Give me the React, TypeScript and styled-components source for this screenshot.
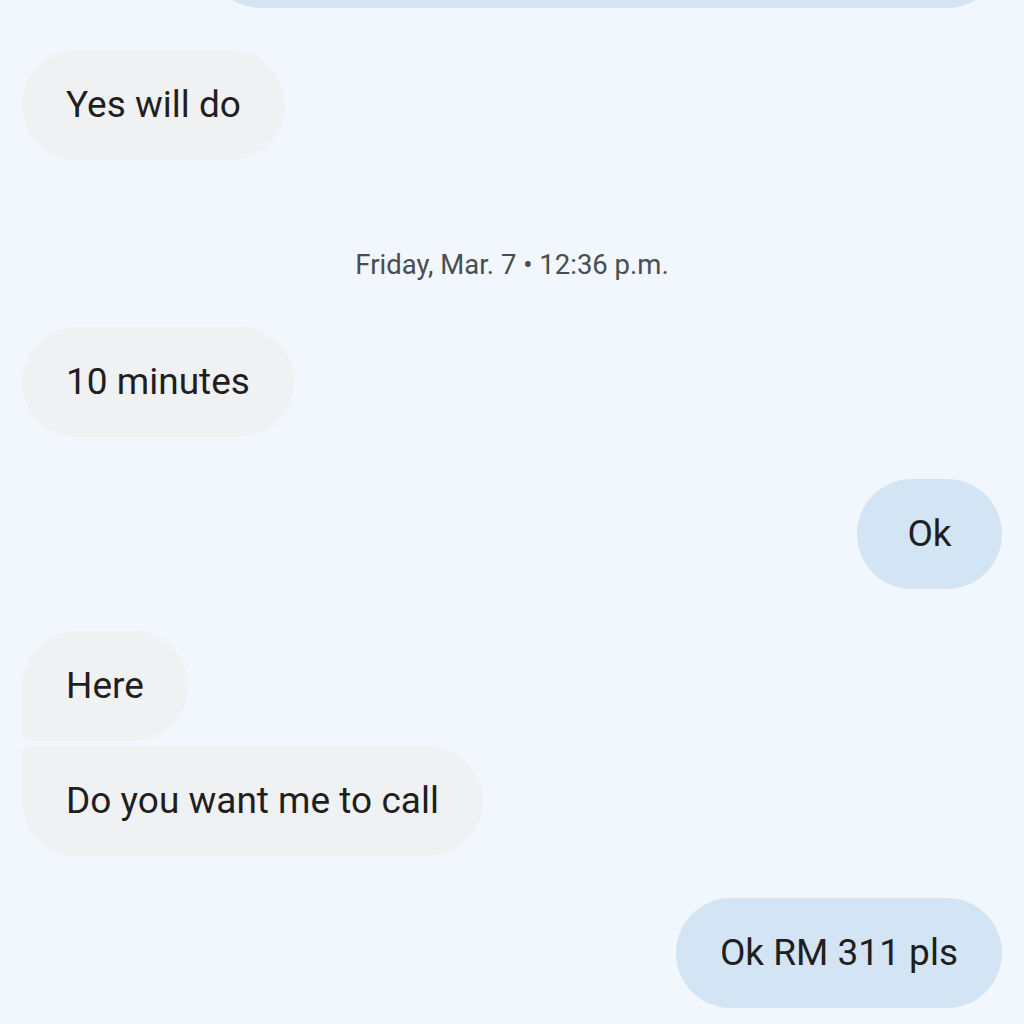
import styled, { createGlobalStyle, css } from "styled-components"

const GlobalStyle = createGlobalStyle`
  html, body {
    margin: 0;
    padding: 0;
    background: #f1f7fc;
    overflow: hidden;
  }
  body {
    font-family: Roboto, "Noto Sans", sans-serif;
    color: #1f1f1f;
  }
`

type Side = "in" | "out"
type Group = "single" | "first" | "last"

interface Message {
  kind: "msg"
  side: Side
  text: string
  group?: Group
  width?: number
}

interface Stamp {
  kind: "stamp"
  text: string
}

type Item = Message | Stamp

const Thread = styled.div`
  display: flex;
  flex-direction: column;
  padding: 0 22px;
  margin-top: -102px;
  height: 1126px;
  overflow: hidden;
`

const Row = styled.div<{ $side: Side; $tight: boolean }>`
  display: flex;
  justify-content: ${(p) => (p.$side === "out" ? "flex-end" : "flex-start")};
  margin-top: ${(p) => (p.$tight ? "5px" : "42px")};

  &:first-child {
    margin-top: 0;
  }
`

const Bubble = styled.div<{ $side: Side; $group: Group }>`
  box-sizing: border-box;
  height: 110px;
  min-width: 145px;
  padding: 0 44px;
  display: flex;
  align-items: center;
  justify-content: center;
  font-size: 37px;
  line-height: 44px;
  white-space: nowrap;
  border-radius: 55px;
  background: ${(p) => (p.$side === "out" ? "#d3e4f4" : "#f0f1f3")};

  ${(p) =>
    p.$group === "first" &&
    css`
      border-bottom-left-radius: 8px;
    `}
  ${(p) =>
    p.$group === "last" &&
    css`
      border-top-left-radius: 8px;
    `}
`

const DateStamp = styled.div`
  margin-top: 42px;
  padding: 48px 0 5px;
  text-align: center;
  font-size: 27.5px;
  line-height: 30px;
  color: #4a4d51;
`

const items: Item[] = [
  { kind: "msg", side: "out", text: "", width: 796 },
  { kind: "msg", side: "in", text: "Yes will do" },
  { kind: "stamp", text: "Friday, Mar. 7 • 12:36 p.m." },
  { kind: "msg", side: "in", text: "10 minutes" },
  { kind: "msg", side: "out", text: "Ok" },
  { kind: "msg", side: "in", text: "Here", group: "first" },
  { kind: "msg", side: "in", text: "Do you want me to call", group: "last" },
  { kind: "msg", side: "out", text: "Ok RM 311 pls" },
]

const App = () => (
  <>
    <GlobalStyle />
    <Thread>
      {items.map((item, index) => {
        if (item.kind === "stamp") {
          return <DateStamp key={index}>{item.text}</DateStamp>
        }
        const group = item.group ?? "single"
        return (
          <Row key={index} $side={item.side} $tight={group === "last"}>
            <Bubble
              $side={item.side}
              $group={group}
              style={item.width ? { width: item.width } : undefined}
            >
              {item.text}
            </Bubble>
          </Row>
        )
      })}
    </Thread>
  </>
)

export default App
